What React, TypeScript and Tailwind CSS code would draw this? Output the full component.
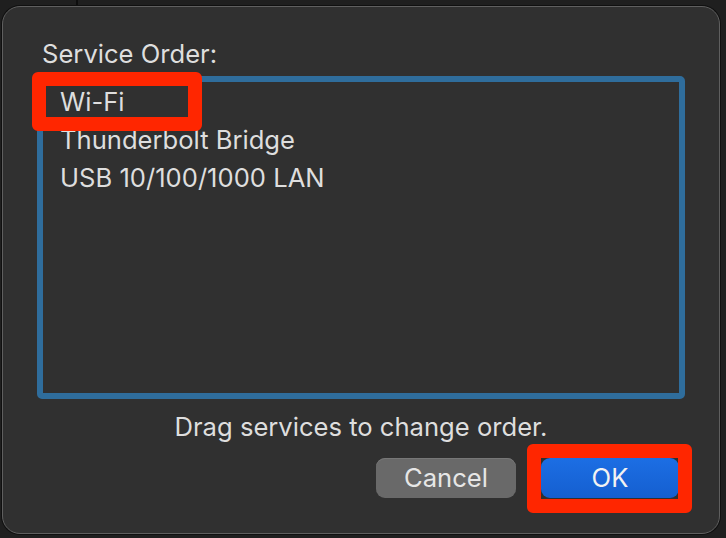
import React from "react";

const font = { fontFamily: "Inter, 'Noto Sans', sans-serif" };

export default function App() {
  return (
    <div
      className="relative w-[726px] h-[538px] bg-[#1f1f1f] overflow-hidden pt-[6px] pl-[2px]"
      style={font}
    >
      <div className="absolute left-[76px] top-0 w-[2px] h-[6px] bg-[#0e0e0e]" />
      <div className="relative w-[718px] h-[528px] rounded-[18px] border border-[#5f5f5f] bg-[#303030] shadow-[0_0_0_1px_#101010] px-[34px] pt-[32px] flex flex-col text-[#dedede]">
        <div className="ml-[5px] text-[25.6px] leading-[30px]">Service Order:</div>
        <div className="mt-[7px] h-[323px] rounded-[5px] border-[6px] border-[#2f6d9c] pt-[1px] flex flex-col">
          <div className="pl-[17px] text-[25.6px] leading-[38px]">Wi-Fi</div>
          <div className="pl-[17px] text-[25.6px] leading-[38px]">Thunderbolt Bridge</div>
          <div className="pl-[17px] text-[25.6px] leading-[38px]">USB 10/100/1000 LAN</div>
        </div>
        <div className="mt-[13px] text-center text-[25.6px] leading-[30px]">
          Drag services to change order.
        </div>
        <div className="mt-[16px] mr-[6px] flex justify-end gap-[25px]">
          <button className="w-[140px] h-[40px] rounded-[9px] bg-[#696969] text-[25.6px] leading-[30px] text-[#e6e6e6] shadow-[inset_0_1px_0_#777]">
            Cancel
          </button>
          <button className="w-[138px] h-[40px] rounded-[9px] bg-gradient-to-b from-[#1c6ee4] to-[#155fd0] text-[25.6px] leading-[30px] text-[#f2f2f2]">
            OK
          </button>
        </div>
        <div className="absolute left-[29px] top-[65px] w-[170px] h-[59px] rounded-[6px] border-[14px] border-[#ff2600]" />
        <div className="absolute left-[524px] top-[437px] w-[165px] h-[69px] rounded-[6px] border-[14px] border-[#ff2600]" />
      </div>
    </div>
  );
}
